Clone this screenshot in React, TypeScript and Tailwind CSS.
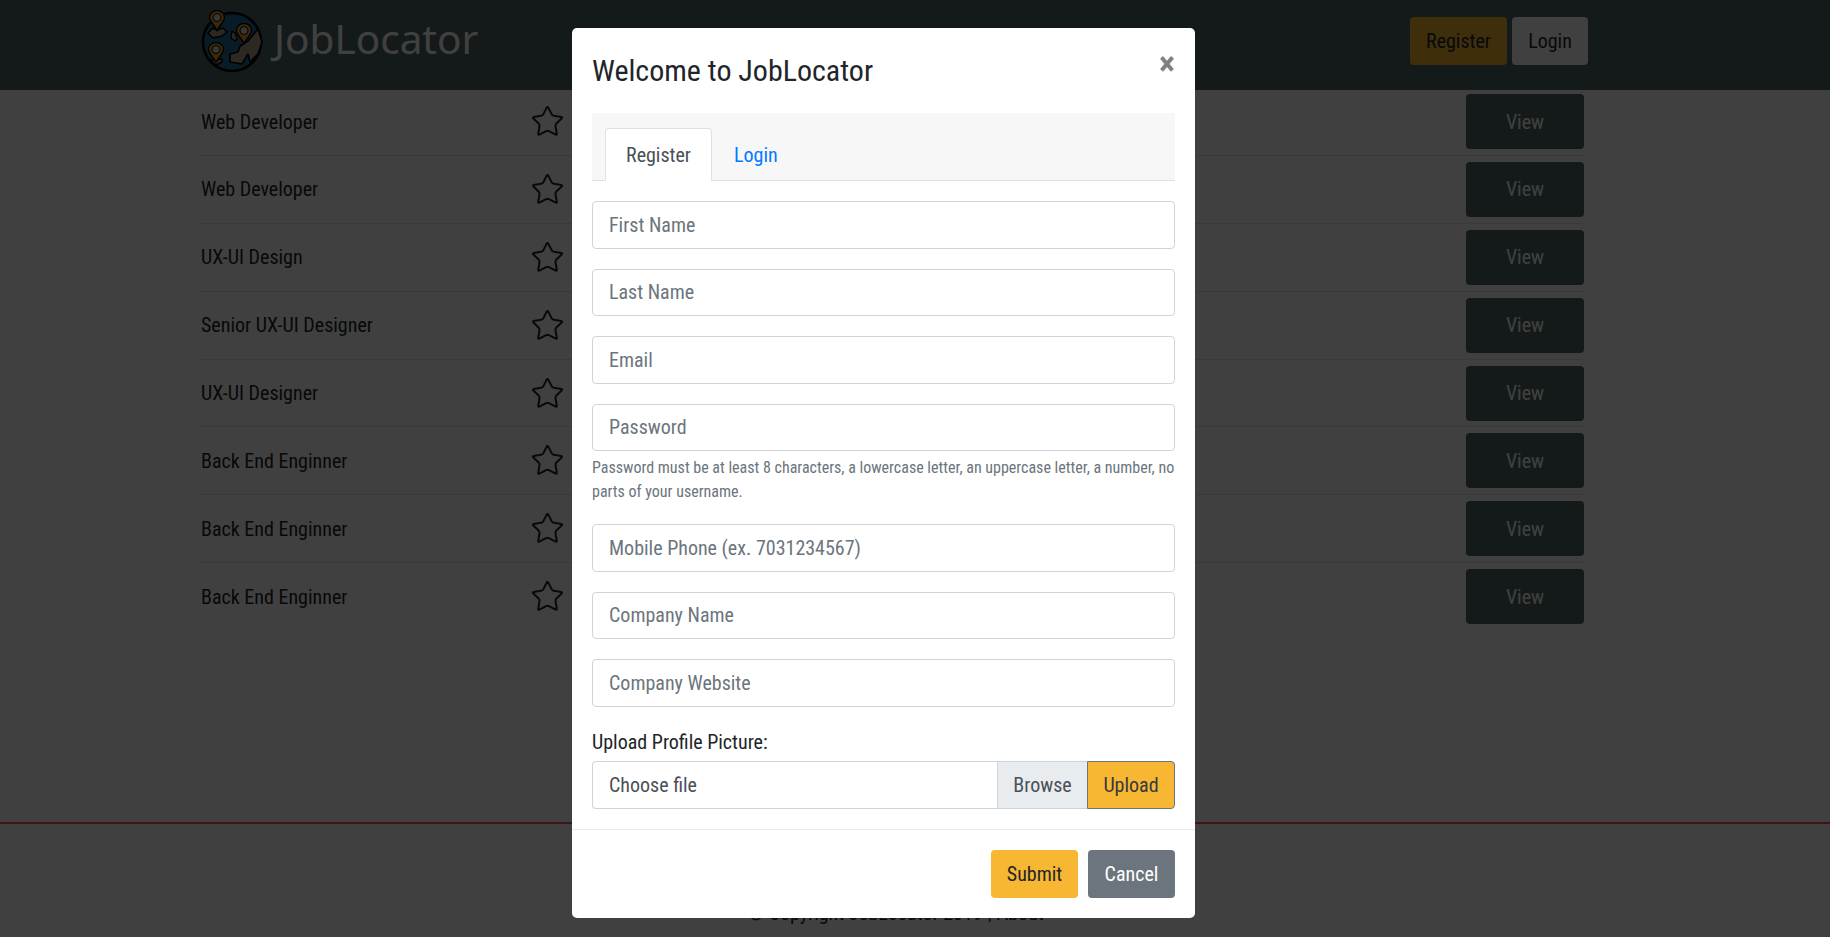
import { Star } from 'lucide-react';

const jobs = [
  'Web Developer',
  'Web Developer',
  'UX-UI Design',
  'Senior UX-UI Designer',
  'UX-UI Designer',
  'Back End Enginner',
  'Back End Enginner',
  'Back End Enginner',
];

function Pin({ x, y }: { x: number; y: number }) {
  return (
    <g transform={`translate(${x} ${y})`}>
      <path d="M0-7.5c4.4 0 7.5 3.2 7.5 7 0 4-4.5 7-7.5 13-3-6-7.5-9-7.5-13 0-3.800 3.100-7 7.500-7z" fill="#f09a1a" stroke="#000" strokeWidth="1.4" />
      <circle cx="0" cy="-.5" r="4" fill="#d8d8d8" stroke="#000" strokeWidth="1" />
    </g>
  );
}

function Logo() {
  return (
    <svg width="64" height="64" viewBox="0 0 64 64" className="shrink-0">
      <circle cx="32" cy="33" r="29" fill="#1f7199" stroke="#000" strokeWidth="2.5" />
      <path d="M30 53l0-8 8-2 2-6 8-5 10-12 4 13-4 12-8 8-2-8-6 10z" fill="#b8a088" stroke="#000" strokeWidth="1.6" strokeLinejoin="round" />
      <path d="M8 24l5-5 4 2 6-2 4 4-5 4-9 2z" fill="#b8a088" stroke="#000" strokeWidth="1.6" strokeLinejoin="round" />
      <path d="M32 22l3 2 2 6-2 2-4-3z" fill="#b8a088" stroke="#000" strokeWidth="1.4" strokeLinejoin="round" />
      <path d="M10 51l6 0 6-1 0 3-6 3z" fill="#b8a088" stroke="#000" strokeWidth="1.4" strokeLinejoin="round" />
      <Pin x={17} y={9} />
      <Pin x={44} y={22} />
      <Pin x={16} y={41} />
    </svg>
  );
}

function Field({ placeholder }: { placeholder: string }) {
  return (
    <input
      placeholder={placeholder}
      className="block h-[47.5px] w-full rounded-[4px] border border-[#ced4da] bg-white px-4 text-[20px] text-[#495057] placeholder:text-[#6c757d]"
    />
  );
}

export default function App() {
  return (
    <div className="relative h-[937px] overflow-hidden bg-white text-[#212529] [font-family:'Roboto_Condensed',Roboto,sans-serif]">
      <header className="h-[90px] bg-[#526468]">
        <div className="ml-[200px] flex h-full w-[1388px] items-center justify-between">
          <div className="-mt-[8px] flex items-center gap-[8px]">
            <Logo />
            <span className="mb-[4px] ml-[2px] text-[40.5px] leading-none text-white [font-family:'Noto_Sans',sans-serif]">JobLocator</span>
          </div>
          <div className="flex gap-[5px] pb-[8px] text-[20px]">
            <button className="h-[48px] w-[97px] rounded-[4px] bg-[#f8b733] text-[#212529]">Register</button>
            <button className="h-[48px] w-[76px] rounded-[4px] bg-white text-[#212529]">Login</button>
          </div>
        </div>
      </header>

      <main className="ml-[200px] w-[1384px] pt-[4px]">
        {jobs.map((job, i) => (
          <div key={i} className="mb-[6px] h-[61.900px] border-b border-[#dee2e6] last:border-b-0">
            <div className="flex h-[55px] items-center">
              <div className="w-[330px] pl-[1px] text-[20px]">{job}</div>
              <Star size={35} strokeWidth={1.4} className="text-[#212529]" />
              <div className="flex-1" />
              <button className="h-[55px] w-[118px] rounded-[4px] bg-[#526468] text-[20px] text-white">View</button>
            </div>
          </div>
        ))}
      </main>

      <footer className="absolute inset-x-0 top-[822px] h-[115px] border-t-2 border-[#ff5050]">
        <p className="ml-[-38px] mt-[77px] text-center text-[20px] leading-[24px]">© Copyright JobLocator 2019 | About</p>
      </footer>

      {/* backdrop + modal sit over the page */}
      <div className="absolute inset-0 bg-black/75" />
      <div className="absolute left-[572px] top-[28px] flex h-[890px] w-[623px] flex-col rounded-[5px] bg-white">
        <div className="flex items-start justify-between px-[20px] pt-[23px]">
          <h5 className="text-[30px] leading-[40px]">Welcome to JobLocator</h5>
          <span className="-mt-[8px] text-[34px] font-bold leading-[40px] text-[#808080]">×</span>
        </div>

        <div className="flex-1 px-[20px] pt-[22px]">
          <div className="flex h-[68px] items-end border-b border-[#dee2e6] bg-[#f7f7f7] px-[13px] text-[20px]">
            <div className="-mb-[1px] flex h-[53px] w-[107px] items-center justify-center rounded-t-[4px] border border-b-0 border-[#dee2e6] bg-white text-[#495057]">Register</div>
            <div className="flex h-[53px] items-center px-[22px] pt-[2px] text-[#007bff]">Login</div>
          </div>

          <div className="mt-[20px] flex flex-col gap-[20px]">
            <Field placeholder="First Name" />
            <Field placeholder="Last Name" />
            <Field placeholder="Email" />
            <div>
              <Field placeholder="Password" />
              <p className="mt-[5px] text-[16px] leading-[24px] text-[#6c757d]">
                Password must be at least 8 characters, a lowercase letter, an uppercase letter, a number, no parts of your username.
              </p>
            </div>
            <Field placeholder="Mobile Phone (ex. 7031234567)" />
            <Field placeholder="Company Name" />
            <Field placeholder="Company Website" />
          </div>

          <div className="mt-[20px] text-[20px] leading-[30px]">Upload Profile Picture:</div>
          <div className="mt-[4px] flex h-[48px] text-[20px]">
            <div className="flex flex-1 items-center rounded-l-[4px] border border-r-0 border-[#ced4da] px-4 text-[#495057]">Choose file</div>
            <div className="flex w-[90px] items-center justify-center border border-r-0 border-[#ced4da] bg-[#e9ecef] text-[#495057]">Browse</div>
            <div className="flex w-[88px] items-center justify-center rounded-r-[4px] border border-[#6c757d] bg-[#f8b733] text-[#343a40]">Upload</div>
          </div>
        </div>

        <div className="flex h-[89px] items-center justify-end gap-[10px] border-t border-[#e9ecef] px-[20px] text-[20px]">
          <button className="h-[48px] w-[87px] rounded-[4px] bg-[#f8b733] text-[#212529]">Submit</button>
          <button className="h-[48px] w-[87px] rounded-[4px] bg-[#6c757d] text-white">Cancel</button>
        </div>
      </div>
    </div>
  );
}
